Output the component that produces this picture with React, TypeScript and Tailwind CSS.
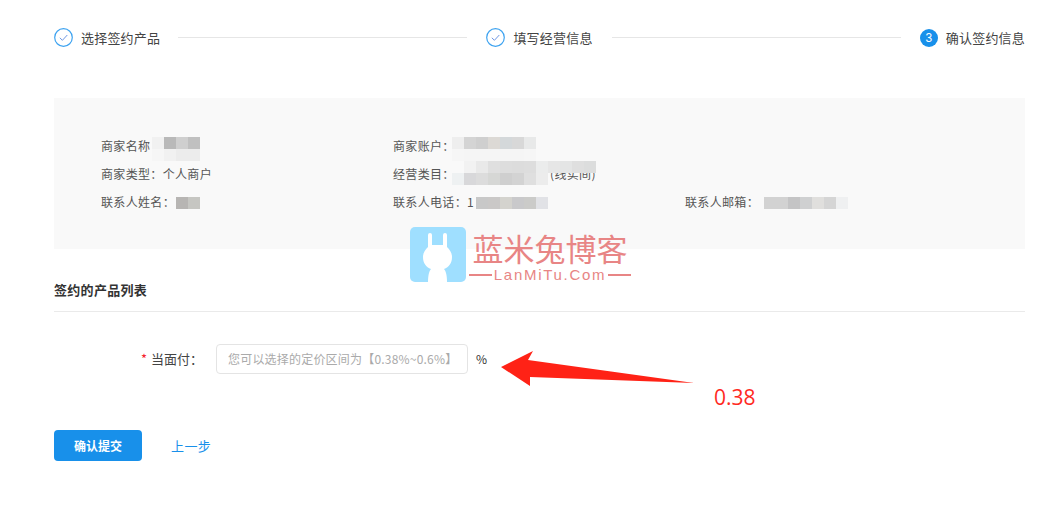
import React from "react";

const cjk = "font-['Noto_Sans_CJK_SC','Liberation_Sans',sans-serif]";

function Done() {
  return (
    <svg width="19" height="19" viewBox="0 0 19 19" className="shrink-0">
      <circle cx="9.5" cy="9.5" r="8.8" fill="none" stroke="#3ea3f0" strokeWidth="1.2" />
      <path d="M5.8 9.8 L8.4 12.3 L13.3 7" fill="none" stroke="#6f97e4" strokeWidth="1" />
    </svg>
  );
}

function Step({ icon, label }: { icon: React.ReactNode; label: string }) {
  return (
    <div className="flex items-center shrink-0 gap-[8px]">
      {icon}
      <span className="text-[13px] leading-[19px] tracking-[0.2px] text-[#444]">{label}</span>
    </div>
  );
}

function Mosaic({ className, rows }: { className: string; rows: { pad?: number; colors: string[] }[] }) {
  return (
    <span className={`absolute flex flex-col ${className}`}>
      {rows.map((r, i) => (
        <span key={i} className="flex" style={{ paddingLeft: r.pad ?? 0 }}>
          {r.colors.map((c, j) => (
            <span key={j} className="block w-[12px] h-[12px]" style={{ background: c }} />
          ))}
        </span>
      ))}
    </span>
  );
}

function Field({ text, children }: { text: string; children?: React.ReactNode }) {
  return (
    <div className="relative w-[292px] h-[28px] leading-[28px] text-[12px] tracking-[0.33px] text-[#555] whitespace-nowrap">
      {text}
      {children}
    </div>
  );
}

export default function App() {
  return (
    <div className={`relative w-[1041px] h-[510px] overflow-hidden bg-white ${cjk}`}>
      <div className="pl-[54px] pr-[16px] pt-[28px]">
        <div className="flex items-center">
          <Step icon={<Done />} label="选择签约产品" />
          <div className="flex-1 h-px bg-[#e6e6e6] ml-[18px] mr-[19px]" />
          <Step icon={<Done />} label="填写经营信息" />
          <div className="flex-1 h-px bg-[#e6e6e6] ml-[19px] mr-[19px]" />
          <Step
            icon={
              <span className="w-[18px] h-[18px] rounded-full bg-[#1890ea] text-white text-[12px] leading-[18px] text-center font-['Liberation_Sans',sans-serif]">
                3
              </span>
            }
            label="确认签约信息"
          />
        </div>

        <div className="mt-[51px] h-[151px] bg-[#f9f9f9] pl-[47px] pt-[34px]">
          <div className="flex">
            <Field text="商家名称">
              <Mosaic
                className="left-[51px] top-[5px]"
                rows={[
                  { colors: ["#f1f1f1", "#b9b9b9", "#cfcfcf", "#c0c0c0"] },
                  { colors: ["#f6f6f6", "#f1f1f1", "#ececec", "#ececec"] },
                ]}
              />
            </Field>
            <Field text="商家账户：">
              <Mosaic
                className="left-[59px] top-[5px]"
                rows={[
                  { colors: ["#eeeeee", "#d4d4d4", "#cfcfcf", "#dcd9d5", "#d4d8da", "#d8d8d8", "#e8e9e9"] },
                  { colors: ["#f6f6f6", "#f5f5f5", "#f5f5f5", "#f5f5f5", "#f5f5f5", "#f5f5f5", "#f6f6f6"] },
                ]}
              />
            </Field>
          </div>
          <div className="flex">
            <Field text="商家类型：个人商户" />
            <Field text="经营类目：">
              <span className="absolute left-[157px] top-0 text-[#555]">(线实间)</span>
              <Mosaic
                className="left-[59px] top-[1px]"
                rows={[
                  { pad: 12, colors: ["#f2f2f2", "#e9e9e9", "#dfdfdf", "#dddddd", "#dcdcdc", "#dddddd", "#ebecec", "#e6e6e6", "#e4e5e5", "#dfdfdf", "#dcdddd"] },
                  { colors: ["#eef1f2", "#d8d8da", "#dcdcdc", "#d6d7d5", "#cfcfcf", "#d3d3d3", "#dfdfdf", "#ececec"] },
                ]}
              />
            </Field>
          </div>
          <div className="flex">
            <Field text="联系人姓名：">
              <Mosaic className="left-[75px] top-[9px]" rows={[{ colors: ["#b7b5b3", "#c6c6c2"] }]} />
            </Field>
            <Field text="联系人电话：1">
              <Mosaic
                className="left-[83px] top-[9px]"
                rows={[{ colors: ["#c8c8c8", "#cac8c7", "#d4d3ce", "#c9c9cb", "#cbcbc9", "#e1e2e6"] }]}
              />
            </Field>
            <Field text="联系人邮箱：">
              <Mosaic
                className="left-[79px] top-[9px]"
                rows={[{ colors: ["#d2d2d2", "#d2d2d2", "#c4c4c5", "#cfd0d1", "#e0dfdd", "#d5d5d5", "#eff0f1"] }]}
              />
            </Field>
          </div>
        </div>

        <div className="mt-[31px] h-[32px] border-b-[1px] border-[#eaeaea] text-[13px] leading-[20px] tracking-[0.3px] font-bold text-[#333]">
          签约的产品列表
        </div>

        <div className="mt-[32px] flex items-center h-[30px]">
          <div className="w-[162px] pr-[13px] text-right text-[13px] text-[#444] whitespace-nowrap">
            <span className="text-[#f5222d] mr-[4px]">*</span>当面付：
          </div>
          <div className="w-[252px] h-[30px] border border-[#e4e4e4] rounded-[4px] pl-[11px] text-[12px] leading-[28px] tracking-[0.2px] text-[#aaa] whitespace-nowrap">
            您可以选择的定价区间为【0.38%~0.6%】
          </div>
          <span className="ml-[8px] text-[12px] text-[#333]">%</span>
        </div>

        <div className="mt-[56px] flex items-center">
          <button className="w-[88px] h-[31px] rounded-[4px] bg-[#1890ea] text-white text-[12px] font-bold">确认提交</button>
          <a className="ml-[29px] text-[13px] tracking-[0.4px] text-[#1890ea]">上一步</a>
        </div>
      </div>

      {/* watermark */}
      <div className="absolute left-[410px] top-[227px] flex">
        <svg width="56" height="55" viewBox="0 0 56 55" className="shrink-0">
          <rect width="56" height="55" rx="5" fill="#9fdfff" />
          <path d="M18 8 a2 2 0 0 1 4 0 V18 h11 V8 a2 2 0 0 1 4 0 V20 C40 23 42 26 42 30 C42 36 39 40 34 42 C36 44 37 49 37 55 H18 C18 49 19 44 21 42 C16 40 13 36 13 30 C13 26 15 23 18 20 Z" fill="#fff" />
        </svg>
      </div>
      <div className="absolute left-[469px] top-[227px] w-[162px] text-[#e88585] flex flex-col items-center">
        <div className="text-[31px] leading-[41px] whitespace-nowrap">蓝米兔博客</div>
        <div className="flex items-center w-full leading-[14px]">
          <span className="h-[2px] w-[23px] bg-[#e88585]" />
          <span className="flex-1 text-center text-[15px] tracking-[1.7px] font-['Liberation_Sans',sans-serif]">LanMiTu.Com</span>
          <span className="h-[2px] w-[23px] bg-[#e88585]" />
        </div>
      </div>

      {/* annotation */}
      <svg className="absolute left-0 top-0" width="1041" height="510">
        <polygon points="501,367 533,351 528,360 694,383 530,377 530,386" fill="#ff2216" />
      </svg>
      <div className="absolute left-[714px] top-[383px] text-[21px] leading-[28px] text-[#ff2a1f] font-['Open_Sans',sans-serif]">0.38</div>
    </div>
  );
}
